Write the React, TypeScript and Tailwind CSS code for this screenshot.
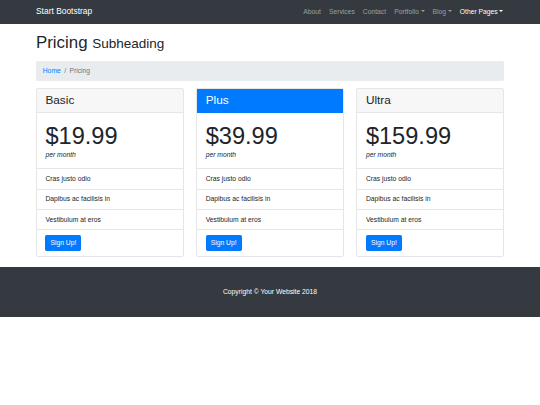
import React from 'react';

interface Plan {
  name: string;
  price: string;
  featured?: boolean;
}

const plans: Plan[] = [
  { name: 'Basic', price: '$19.99' },
  { name: 'Plus', price: '$39.99', featured: true },
  { name: 'Ultra', price: '$159.99' },
];

const features = ['Cras justo odio', 'Dapibus ac facilisis in', 'Vestibulum at eros'];

const Caret: React.FC = () => (
  <span className="inline-block w-0 h-0 ml-[1.7px] align-[1.7px] border-t-[2px] border-x-[2px] border-x-transparent border-t-current" />
);

const navLinks: { label: string; dropdown?: boolean; active?: boolean }[] = [
  { label: 'About' },
  { label: 'Services' },
  { label: 'Contact' },
  { label: 'Portfolio', dropdown: true },
  { label: 'Blog', dropdown: true },
  { label: 'Other Pages', dropdown: true, active: true },
];

const PricingCard: React.FC<{ plan: Plan }> = ({ plan }) => (
  <div className="flex flex-col border border-[#e6e6e6] rounded-[2px] bg-white">
    {/* Header */}
    <h3
      className={`px-[8.44px] py-[4.6px] text-[11.8px] leading-[14.2px] border-b ${
        plan.featured ? 'bg-[#007bff] text-white border-[#007bff]' : 'bg-[#f7f7f7] border-[#e6e6e6]'
      }`}
    >
      {plan.name}
    </h3>

    {/* Price */}
    <div className="p-[8.44px]">
      <div className="text-[23.6px] leading-[28.35px] font-light">{plan.price}</div>
      <div className="italic text-[6.75px] leading-[10.125px]">per month</div>
    </div>

    {/* Features */}
    <ul>
      {features.map((f) => (
        <li key={f} className="border-t border-[#e6e6e6] px-[8.44px] py-[4.6px] text-[6.75px] leading-[10.125px]">
          {f}
        </li>
      ))}
      <li className="flex border-t border-[#e6e6e6] px-[8.44px] py-[4.6px] text-[6.75px] leading-[10.125px]">
        <a
          href="#"
          className="block bg-[#007bff] text-white rounded-[1.7px] px-[5.06px] py-[2.95px] text-[6.75px] leading-[10.125px]"
        >
          Sign Up!
        </a>
      </li>
    </ul>
  </div>
);

const App: React.FC = () => {
  return (
    <div className="min-h-[405px] bg-white text-[#212529] font-['Liberation_Sans',Arial,sans-serif]">
      {/* Navbar */}
      <nav className="h-[23.6px] bg-[#343a40]">
        <div className="w-[468px] h-full mx-auto flex items-center justify-between">
          <a href="#" className="text-white text-[8.44px] leading-[12.66px]">
            Start Bootstrap
          </a>
          <ul className="flex mr-[-3.375px]">
            {navLinks.map((l) => (
              <li
                key={l.label}
                className={`px-[4px] text-[6.75px] leading-[10.125px] ${
                  l.active ? 'text-white' : 'text-white/50'
                }`}
              >
                {l.label}
                {l.dropdown && <Caret />}
              </li>
            ))}
          </ul>
        </div>
      </nav>

      {/* Page content */}
      <div className="w-[468px] mx-auto pt-[9.1px]">
        <h1 className="text-[16.875px] leading-[20.25px] font-medium mb-[6.75px]">
          Pricing <small className="text-[13.5px] font-normal">Subheading</small>
        </h1>

        <ol className="flex items-center h-[20.25px] px-[6.75px] rounded-[1.7px] bg-[#e9ecef] text-[6.75px] leading-[10.125px] mb-[6.75px]">
          <li>
            <a href="#" className="text-[#007bff]">Home</a>
          </li>
          <li className="text-[#6c757d]">
            <span className="px-[3.375px]">/</span>Pricing
          </li>
        </ol>

        <div className="grid grid-cols-3 gap-x-[12.66px] mb-[10.125px]">
          {plans.map((p) => (
            <PricingCard key={p.name} plan={p} />
          ))}
        </div>
      </div>

      {/* Footer */}
      <footer className="bg-[#343a40] py-[20.25px]">
        <p className="text-center text-white text-[6.75px] leading-[10.125px]">
          Copyright &copy; Your Website 2018
        </p>
      </footer>
    </div>
  );
};

export default App;
